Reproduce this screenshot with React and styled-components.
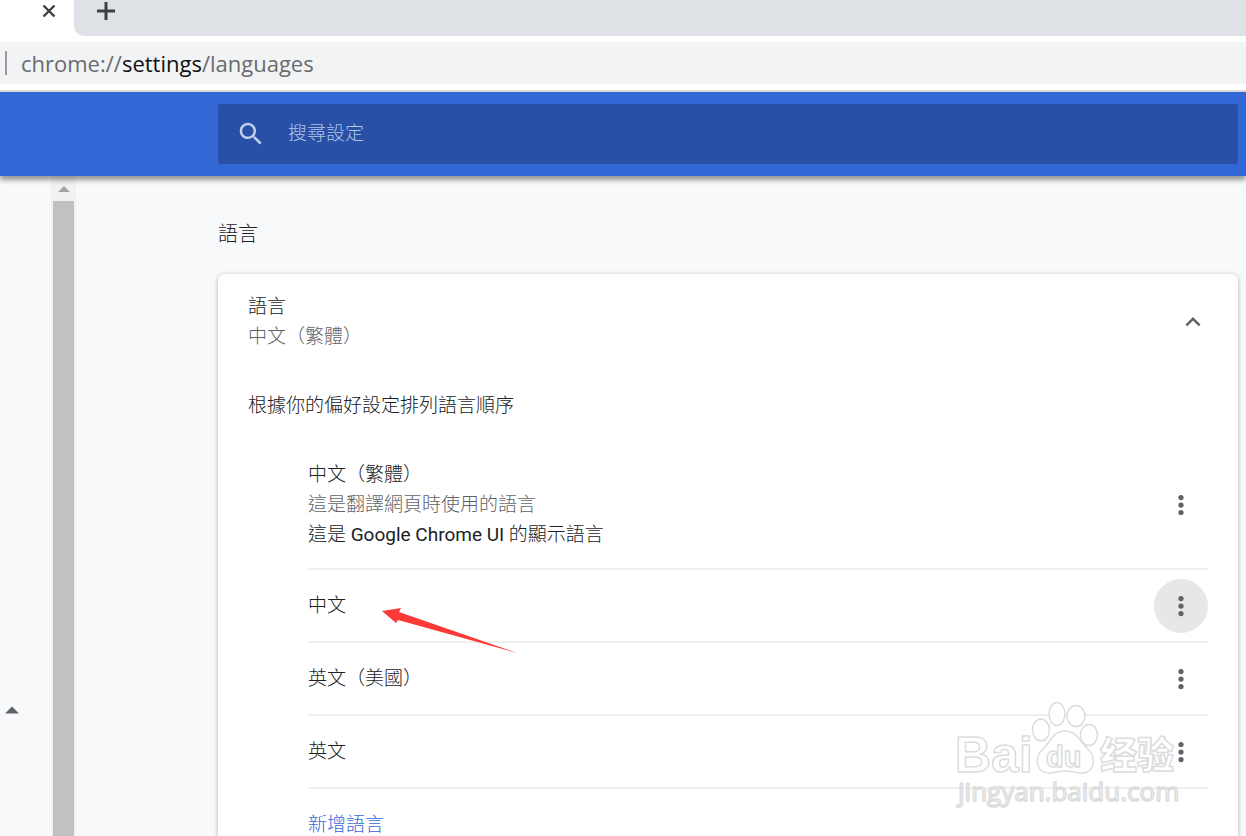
import React, { useState } from 'react';
import styled, { createGlobalStyle } from 'styled-components';

const languages = [
    {
        id: 'zh-TW',
        name: '中文（繁體）',
        hint: '這是翻譯網頁時使用的語言',
        display: <>這是 <b>Google Chrome UI</b> 的顯示語言</>,
    },
    { id: 'zh', name: '中文' },
    { id: 'en-US', name: '英文（美國）' },
    { id: 'en', name: '英文' },
]

const App = () => {
    const [search, setSearch] = useState('')
    const [selected, setSelected] = useState('zh')
    const [open, setOpen] = useState(true)

    return (
        <>
            <GlobalStyle />
            <Window>
                <TabStrip>
                    <ActiveTab>
                        <TabButton aria-label='關閉分頁'>
                            <svg width='14' height='14' viewBox='0 0 14 14'>
                                <path d='M1.5 1.5l11 11M12.5 1.5l-11 11' stroke='#3c4043' strokeWidth='2.4' />
                            </svg>
                        </TabButton>
                    </ActiveTab>
                    <TabsRest>
                        <TabButton aria-label='新分頁'>
                            <svg width='20' height='20' viewBox='0 0 20 20'>
                                <path d='M10 1v18M1 10h18' stroke='#3c4043' strokeWidth='3' />
                            </svg>
                        </TabButton>
                    </TabsRest>
                </TabStrip>

                <Toolbar>
                    <Omnibox>
                        <Separator />
                        <Url role='textbox' aria-label='網址' tabIndex={0}>
                            chrome://<strong>settings</strong>/languages
                        </Url>
                    </Omnibox>
                </Toolbar>

                <Header>
                    <SearchBox>
                        <svg width='30' height='30' viewBox='0 0 24 24' fill='currentColor'>
                            <path d='M15.5 14h-.79l-.28-.27C15.41 12.59 16 11.11 16 9.5 16 5.91 13.09 3 9.5 3S3 5.91 3 9.5 5.91 16 9.5 16c1.61 0 3.09-.59 4.23-1.57l.27.28v.79l5 4.99L20.49 19l-4.99-5zm-6 0C7.01 14 5 11.99 5 9.5S7.01 5 9.5 5 14 7.01 14 9.5 11.99 14 9.5 14z' />
                        </svg>
                        <SearchInput
                            type='text'
                            aria-label='搜尋設定'
                            placeholder='搜尋設定'
                            value={search}
                            onChange={(e) => setSearch(e.target.value)}
                        />
                    </SearchBox>
                </Header>

                <Body>
                    <Sidebar>
                        <MenuToggle aria-label='進階'>
                            <svg width='14' height='8' viewBox='0 0 14 8'>
                                <path d='M0 7.5L7 .5l7 7z' fill='#5f6368' />
                            </svg>
                        </MenuToggle>
                    </Sidebar>
                    <ScrollTrack>
                        <ScrollArrow>
                            <svg width='12' height='6' viewBox='0 0 12 6'>
                                <path d='M0 6l6-6 6 6z' fill='#a3a3a3' />
                            </svg>
                        </ScrollArrow>
                        <ScrollThumb />
                    </ScrollTrack>

                    <Main>
                        <SectionTitle>語言</SectionTitle>
                        <Card>
                            <CardHeader>
                                <Lines>
                                    <Line>語言</Line>
                                    <Line $muted>中文（繁體）</Line>
                                </Lines>
                                <ExpandButton aria-label='語言' aria-expanded={open} onClick={() => setOpen(!open)}>
                                    <svg width='30' height='30' viewBox='0 0 24 24' fill='#5f6368'>
                                        <path d='M12 8l-6 6 1.41 1.41L12 10.83l4.59 4.58L18 14z' />
                                    </svg>
                                </ExpandButton>
                            </CardHeader>
                            {open &&
                                <>
                                    <Description>根據你的偏好設定排列語言順序</Description>
                                    <LanguageList>
                                        {languages.map((language) => {
                                            return <LanguageRow key={language.id}>
                                                <Lines>
                                                    <Line>{language.name}</Line>
                                                    {language.hint && <Line $muted>{language.hint}</Line>}
                                                    {language.display && <Line>{language.display}</Line>}
                                                </Lines>
                                                {language.id === 'zh' && <Pointer />}
                                                <MoreButton
                                                    aria-label='更多動作'
                                                    $active={selected === language.id}
                                                    onClick={() => setSelected(language.id)}
                                                >
                                                    <svg width='30' height='30' viewBox='0 0 24 24' fill='#5f6368'>
                                                        <circle cx='12' cy='6' r='2.1' />
                                                        <circle cx='12' cy='12' r='2.1' />
                                                        <circle cx='12' cy='18' r='2.1' />
                                                    </svg>
                                                </MoreButton>
                                            </LanguageRow>
                                        })}
                                        <LanguageRow>
                                            <AddLink href='#add'>新增語言</AddLink>
                                        </LanguageRow>
                                    </LanguageList>
                                </>
                            }
                        </Card>
                    </Main>
                </Body>
                <Watermark />
            </Window>
        </>
    );
}

const Pointer = () => (
    <PointerSvg width='136' height='46' viewBox='0 0 136 46'>
        <path d='M0 4L19 1l-2 4 118 41L16 13l-2 3z' fill='#fb3a38' />
    </PointerSvg>
)

const Watermark = () => (
    <WatermarkSvg width='230' height='112' viewBox='0 0 230 112'>
        <g fill='#fff' fillOpacity='.85' stroke='#dcdcdc' strokeWidth='1.5' strokeLinejoin='round'>
            <text x='-1' y='72' fontSize='50' fontWeight='700'>Bai</text>
            <ellipse cx='85' cy='30' rx='8.5' ry='11' />
            <ellipse cx='101' cy='14' rx='8' ry='11.5' />
            <ellipse cx='120' cy='16' rx='9' ry='10.5' />
            <ellipse cx='133' cy='35' rx='8.5' ry='10.5' />
            <path d='M109 31c-12 0-15 12-22 18-10 9-6 24 6 24 6 0 9-2 16-2s11 2 17 2c12 0 15-15 6-24-7-6-11-18-23-18z' />
            <text x='90' y='67' fontSize='29' fontWeight='700'>du</text>
            <text x='144' y='69' fontSize='37' fontWeight='900'>经验</text>
            <SiteName x='2' y='101'>jingyan.baidu.com</SiteName>
        </g>
    </WatermarkSvg>
)

const GlobalStyle = createGlobalStyle`
    * {
        box-sizing: border-box;
    }

    body {
        margin: 0;
        color: #202124;
        background: #f8f9fb;
        font-family: Roboto, 'Noto Sans CJK TC', sans-serif;
        font-size: 19px;
        font-weight: 300;
        line-height: 30px;
    }

    button {
        display: flex;
        align-items: center;
        justify-content: center;
        flex: none;
        padding: 0;
        border: 0;
        background: transparent;
        cursor: pointer;
    }

    svg {
        display: block;
        flex: none;
    }
`

const Window = styled.div`
    position: relative;
    display: flex;
    flex-direction: column;
    height: 100vh;
    overflow: hidden;
`

const TabStrip = styled.div`
    display: flex;
    flex: none;
    height: 36px;
    background: #fff;
`

const ActiveTab = styled.div`
    display: flex;
    justify-content: flex-end;
    width: 74px;
    padding-right: 14px;
`

const TabsRest = styled.div`
    flex: 1;
    padding-left: 21px;
    background: #dee1e6;
    border-bottom-left-radius: 10px;
`

const TabButton = styled.button`
    width: 22px;
    height: 22px;
`

const Toolbar = styled.div`
    flex: none;
    padding: 6px 0;
    background: #fff;
    border-bottom: 2px solid #d9dbde;
`

const Omnibox = styled.div`
    display: flex;
    align-items: center;
    height: 42px;
    padding-left: 5px;
    background: #f1f3f4;
`

const Separator = styled.div`
    width: 2px;
    height: 24px;
    margin-right: 14px;
    background: #9a9c9f;
`

const Url = styled.div`
    color: #696b6e;
    font-family: 'Open Sans', sans-serif;
    font-size: 22px;
    font-weight: 400;

    strong {
        color: #111;
        font-weight: 400;
    }
`

const Header = styled.header`
    position: relative;
    z-index: 1;
    flex: none;
    padding: 12px 8px 12px 218px;
    background: #3367d6;
    box-shadow: 0 4px 5px rgba(0, 0, 0, 0.4);
`

const SearchBox = styled.div`
    display: flex;
    align-items: center;
    gap: 22px;
    height: 60px;
    padding: 0 18px;
    color: #c2cfe9;
    background: #2750a6;
    border-radius: 3px;
`

const SearchInput = styled.input`
    flex: 1;
    min-width: 0;
    padding: 0;
    border: 0;
    outline: 0;
    color: #fff;
    background: transparent;
    font: inherit;

    &::placeholder {
        color: #b4c3e4;
        opacity: 1;
    }
`

const Body = styled.div`
    display: flex;
    flex: 1;
    min-height: 0;
`

const Sidebar = styled.aside`
    flex: none;
    width: 51px;
    padding: 522px 0 0;
`

const MenuToggle = styled.button`
    width: 24px;
    height: 24px;
`

const ScrollTrack = styled.div`
    display: flex;
    flex-direction: column;
    flex: none;
    width: 25px;
    padding: 0 2px;
    background: #f1f1f1;
`

const ScrollArrow = styled.div`
    display: flex;
    align-items: center;
    justify-content: center;
    height: 25px;
`

const ScrollThumb = styled.div`
    flex: 1;
    background: #c1c1c1;
`

const Main = styled.main`
    flex: 1;
    min-width: 0;
    padding: 43px 8px 0 142px;
`

const SectionTitle = styled.h2`
    margin: 0 0 25px;
    font-size: 20px;
    font-weight: 300;
`

const Card = styled.section`
    padding: 0 30px;
    background: #fff;
    border-radius: 6px;
    box-shadow: 0 1px 4px rgba(60, 64, 67, 0.4);
`

const CardHeader = styled.div`
    display: flex;
    align-items: center;
    justify-content: space-between;
    height: 96px;
`

const ExpandButton = styled.button`
    width: 30px;
    height: 30px;
`

const Lines = styled.div`
    flex: 1;
`

const Line = styled.div`
    color: ${(props) => props.$muted ? '#5f6368' : '#202124'};

    b {
        font-weight: 400;
    }
`

const Description = styled.div`
    padding: 21px 0;
`

const LanguageList = styled.ul`
    margin: 0;
    padding: 0 0 0 60px;
    list-style: none;
`

const LanguageRow = styled.li`
    position: relative;
    display: flex;
    align-items: center;
    min-height: 73px;
    padding: 8px 0;
    border-top: 2px solid #efefef;

    &:first-child {
        min-height: 126px;
        border-top: 0;
    }
`

const MoreButton = styled.button`
    width: 54px;
    height: 54px;
    border-radius: 50%;

    && {
        background: ${(props) => props.$active ? '#e7e7e7' : 'transparent'};
    }
`

const AddLink = styled.a`
    color: #3367d6;
    text-decoration: none;
`

const PointerSvg = styled.svg`
    position: absolute;
    z-index: 1;
    left: 74px;
    top: 37px;
`

const WatermarkSvg = styled.svg`
    position: absolute;
    right: 60px;
    bottom: 24px;
    overflow: visible;
    pointer-events: none;
    font-family: 'Liberation Sans', 'Noto Sans CJK SC', sans-serif;
`

const SiteName = styled.text`
    font-family: 'Open Sans', sans-serif;
    font-size: 26px;
    font-weight: 400;
`

export default App;
